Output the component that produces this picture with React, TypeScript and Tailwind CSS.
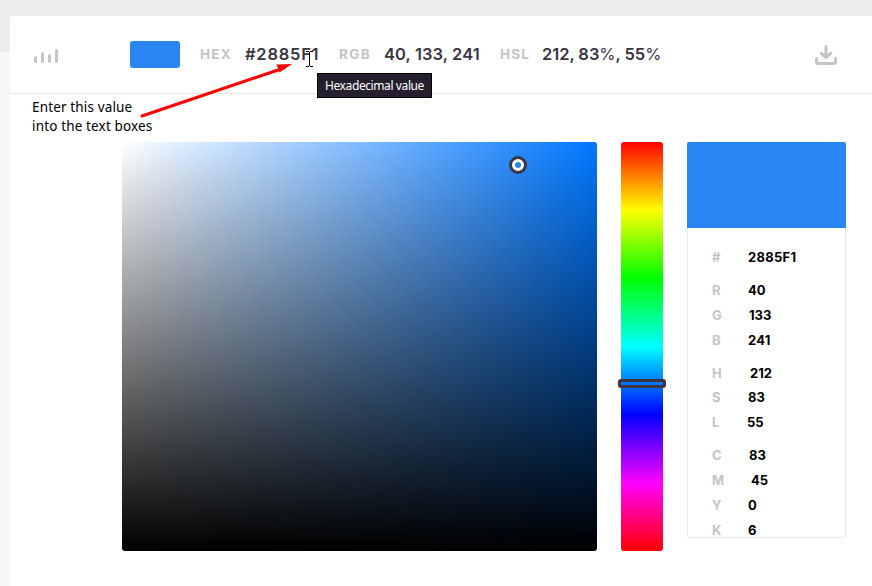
import React from "react";

type Entry = { label: string; value: string; row: string; indent: string };

const entries: Entry[] = [
  { label: "#", value: "2885F1", row: "h-[33px]", indent: "pl-[36px] tracking-[0.3px]" },
  { label: "R", value: "40", row: "h-[25px]", indent: "pl-[36px]" },
  { label: "G", value: "133", row: "h-[25px]", indent: "pl-[37px]" },
  { label: "B", value: "241", row: "h-[33px]", indent: "pl-[36px] tracking-[0.2px]" },
  { label: "H", value: "212", row: "h-[24px]", indent: "pl-[38px]" },
  { label: "S", value: "83", row: "h-[25px]", indent: "pl-[36px]" },
  { label: "L", value: "55", row: "h-[33px]", indent: "pl-[35px]" },
  { label: "C", value: "83", row: "h-[25px]", indent: "pl-[37px]" },
  { label: "M", value: "45", row: "h-[25px]", indent: "pl-[39px]" },
  { label: "Y", value: "0", row: "h-[25px]", indent: "pl-[36px]" },
  { label: "K", value: "6", row: "h-[16px]", indent: "pl-[36px]" },
];

function BarsIcon() {
  return (
    <svg width="26" height="16" viewBox="0 0 26 16" stroke="#c4c4c4" strokeWidth="3" strokeLinecap="round">
      <path d="M2.5 9.5v4M9.5 5.5v8M16.5 7.5v6M23.5 2.5v11" />
    </svg>
  );
}

function DownloadIcon() {
  return (
    <svg width="22" height="20" viewBox="0 0 22 20" fill="none" stroke="#c4c4c4" strokeWidth="3" strokeLinecap="round" strokeLinejoin="round">
      <path d="M11 1.5v11M6.2 8.3l4.8 4.2 4.8-4.2M1.5 13.5v3.5q0 1.500 1.500 1.500h16q1.500 0 1.500-1.500v-3.500" />
    </svg>
  );
}

function Field({ label, value, labelClass, valueClass }: { label: string; value: React.ReactNode; labelClass: string; valueClass: string }) {
  return (
    <div className="flex shrink-0 items-center whitespace-nowrap">
      <span className={`shrink-0 text-[13.5px] leading-5 font-bold text-[#c4c4c4] ${labelClass}`}>{label}</span>
      <span className={`shrink-0 text-[16.5px] leading-5 text-[#3b3441] ${valueClass}`}>{value}</span>
    </div>
  );
}

export default function App() {
  return (
    <div className="relative h-[586px] w-[872px] overflow-hidden bg-[linear-gradient(#eeeeee_52px,#f7f7f7_52px)] pt-4 pl-2.5 font-['Inter',sans-serif]">
      <main className="h-[570px] w-[862px] rounded-tl-[3px] bg-white">
        <header className="flex h-[78px] items-center border-b border-[#e6e6e6] pl-[23px]">
          <div className="w-[97px] shrink-0 pt-0.5">
            <BarsIcon />
          </div>
          <div className="h-[27px] w-[50px] shrink-0 rounded-[3px] bg-[#2885f1]" />
          <div className="flex w-[635px] shrink-0 items-center pb-0.5 pl-5">
            <Field label="HEX" value="#2885F1" labelClass="w-[45px] tracking-[1.2px]" valueClass="w-[94px] font-semibold tracking-[0.75px]" />
            <Field label="RGB" value="40, 133, 241" labelClass="w-[45px] tracking-[1.4px]" valueClass="w-[116px] font-semibold tracking-[0.1px]" />
            <Field
              label="HSL"
              value={
                <>
                  212, 83<span className="font-normal">%</span>, 55<span className="font-normal">%</span>
                </>
              }
              labelClass="w-[42px] tracking-[1.1px]"
              valueClass="w-[120px] font-semibold tracking-[-0.05px]"
            />
          </div>
          <div className="shrink-0">
            <DownloadIcon />
          </div>
        </header>

        <p className="h-12 pt-1 pl-[22px] font-['Noto_Sans',sans-serif] text-[13.5px] leading-[19px] tracking-[0.15px] text-black">
          Enter this value
          <br />
          into the text boxes
        </p>

        <section className="flex items-start pl-[112px]">
          <div className="relative h-[409px] w-[475px] rounded-[3px] bg-[linear-gradient(to_top,#000000,transparent),linear-gradient(to_right,#ffffff,#0077ff)]">
            <div className="absolute top-[14px] left-[387px] flex size-[18px] items-center justify-center rounded-full border-[3px] border-[#3b3441] bg-white">
              <div className="size-1.5 rounded-full bg-[#2885f1]" />
            </div>
          </div>
          <div className="relative ml-6 h-[409px] w-[42px] rounded-[3px] bg-[linear-gradient(#ff0000,#ffff00,#00ff00,#00ffff,#0000ff,#ff00ff,#ff0000)]">
            <div className="absolute top-[237px] -left-[3px] h-[9px] w-[48px] rounded-[3px] border-[3px] border-[#3b3441]" />
          </div>
          <aside className="ml-6 w-[159px]">
            <div className="h-[86px] rounded-t-[2px] bg-[#2885f1]" />
            <dl className="h-[310px] overflow-hidden rounded-b-[3px] border border-t-0 border-[#e9e9e9] pt-5 pl-6 text-[13px]">
              {entries.map((e) => (
                <div key={e.label} className={`flex items-start leading-[18px] ${e.row}`}>
                  <dt className="w-0 overflow-visible font-bold text-[#c4c4c4]">{e.label}</dt>
                  <dd className={`font-bold text-black ${e.indent}`}>{e.value}</dd>
                </div>
              ))}
            </dl>
          </aside>
        </section>
      </main>

      <svg className="pointer-events-none absolute inset-0" width="872" height="586">
        <path d="M142 116L281 69" stroke="#ff0000" strokeWidth="3" strokeLinecap="round" />
        <path d="M292 64L276.500 64.500L279.500 72.500Z" fill="#ff0000" />
        <path d="M306 51.500h3M310 51.500h3M309.500 52v14M306 66.500h3M310 66.500h3" stroke="#000000" strokeWidth="1" />
      </svg>
      <div className="absolute top-[73px] left-[317px] flex h-[25px] w-[115px] items-center justify-center border border-black bg-[#251f30] font-['Noto_Sans',sans-serif] text-[12px] whitespace-nowrap text-white">
        <span className="tracking-[-0.4px]">Hexadecimal value</span>
      </div>
    </div>
  );
}
